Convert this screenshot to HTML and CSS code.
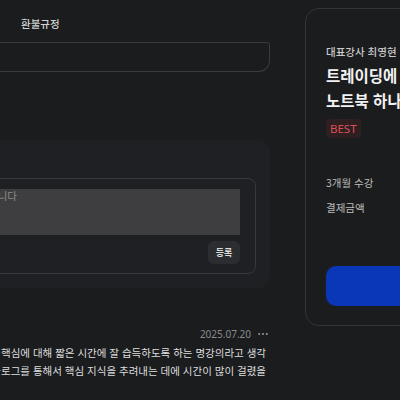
FILE: index.html
```html
<!DOCTYPE html>
<html lang="ko">
<head>
<meta charset="utf-8">
<link rel="stylesheet" href="styles.css">
</head>
<body>
<div class="page">
  <div class="main">
    <div class="tabs">
      <span class="tab">환불규정</span>
    </div>
    <div class="refund-box"></div>
    <div class="panel">
      <div class="comment-box">
        <div class="textarea">수강 후기를 남겨주시면 큰 힘이 됩니다</div>
        <div class="actions"><button class="submit">등록</button></div>
      </div>
    </div>
    <div class="review">
      <div class="meta">
        <span class="date">2025.07.20</span>
        <svg class="more" width="10" height="4" viewBox="0 0 10 4" aria-label="더보기">
          <circle cx="1.2" cy="2" r="1" fill="#9a9a9a"/>
          <circle cx="5" cy="2" r="1" fill="#9a9a9a"/>
          <circle cx="8.8" cy="2" r="1" fill="#9a9a9a"/>
        </svg>
      </div>
      <div class="body">
        <span class="line">트레이딩의 핵심에 대해 짧은 시간에 잘 습득하도록 하는 명강의라고 생각</span>
        <span class="line">합니다. 유튜브나 블로그를 통해서 핵심 지식을 추려내는 데에 시간이 많이 걸렸을</span>
      </div>
    </div>
  </div>
  <aside class="card">
    <div class="teacher">대표강사 최영현</div>
    <div class="title">트레이딩에 필요한 모든 것<br>노트북 하나로 시작하는 투자</div>
    <span class="badge">BEST</span>
    <div class="period">3개월 수강</div>
    <div class="price-label">결제금액</div>
    <button class="buy">수강신청</button>
  </aside>
</div>
</body>
</html>
```

FILE: styles.css
```css
html, body {
  margin: 0;
  padding: 0;
  background: #1b1c1e;
  overflow: hidden;
  width: 400px;
  height: 400px;
}
body {
  font-family: "Noto Sans CJK KR", "Noto Sans", sans-serif;
  color: #e6e6e6;
}
.page {
  display: flex;
  align-items: flex-start;
  gap: 35px;
  margin-left: -330px;
}
.main {
  width: 600px;
  flex: none;
}
.tabs {
  height: 42px;
  box-sizing: border-box;
  padding-top: 16px;
  padding-left: 351px;
  display: flex;
}
.tab {
  font-size: 10.5px;
  line-height: 16px;
  font-weight: 500;
  color: #d2d2d2;
}
.refund-box {
  height: 28px;
  border: 1px solid #3a3b3e;
  border-left: none;
  border-radius: 0 3px 11px 0;
}
.panel {
  margin-top: 68px;
  height: 148px;
  box-sizing: border-box;
  background: #1f2023;
  border-radius: 0 12px 12px 0;
  padding: 38px 14px 0 0;
}
.comment-box {
  height: 96px;
  box-sizing: border-box;
  border: 1px solid #37383b;
  border-radius: 8px;
  padding: 10px 15px 0 0;
}
.textarea {
  height: 46px;
  box-sizing: border-box;
  background: #3e3e40;
  color: #8a8a8a;
  font-size: 10.5px;
  line-height: 14px;
  padding: 0 223px 0 0;
  text-align: right;
  white-space: nowrap;
  overflow: hidden;
}
.actions {
  display: flex;
  justify-content: flex-end;
  margin-top: 6px;
}
.submit {
  width: 32px;
  height: 23px;
  border: none;
  border-radius: 6px;
  background: #2b2d30;
  color: #dcdcdc;
  font-family: inherit;
  font-size: 9px;
  font-weight: 700;
  padding: 0;
}
.review {
  margin-top: 38px;
}
.meta {
  display: flex;
  justify-content: flex-end;
  align-items: center;
  gap: 7px;
  padding-right: 2px;
  height: 16px;
}
.date {
  font-size: 10px;
  color: #8a8a8a;
  line-height: 16px;
  font-family: "Noto Sans", sans-serif;
}
.more {
  display: block;
}
.body {
  margin-top: 2px;
  padding-right: 4px;
  text-align: right;
}
.line {
  display: block;
  white-space: nowrap;
  font-size: 10.5px;
  line-height: 18px;
  color: #dedede;
}
.card {
  flex: none;
  width: 300px;
  margin-top: 8px;
  height: 318px;
  box-sizing: border-box;
  border: 1px solid #323437;
  border-radius: 14px;
  padding: 35px 0 0 20px;
  display: flex;
  flex-direction: column;
  align-items: flex-start;
}
.teacher {
  font-size: 10.5px;
  line-height: 16px;
  color: #c9c9c9;
  font-weight: 500;
}
.title {
  margin-top: 3px;
  font-size: 15.5px;
  line-height: 25px;
  font-weight: 700;
  color: #f2f2f2;
  white-space: nowrap;
}
.badge {
  margin-top: 6px;
  height: 19px;
  line-height: 19px;
  padding: 0 4px;
  font-size: 11.5px;
  color: #dc5057;
  background: #2e1f21;
  border-radius: 4px;
  font-family: "Noto Sans", sans-serif;
}
.period {
  margin-top: 37px;
  font-size: 10.5px;
  line-height: 16px;
  color: #bcbcbc;
}
.price-label {
  margin-top: 9px;
  font-size: 10.5px;
  line-height: 16px;
  color: #bcbcbc;
}
.buy {
  margin-top: 50px;
  width: 260px;
  height: 40px;
  border: none;
  border-radius: 10px;
  background: #0a37b8;
  color: #fff;
  font-family: inherit;
  font-size: 13px;
  font-weight: 700;
}
```
